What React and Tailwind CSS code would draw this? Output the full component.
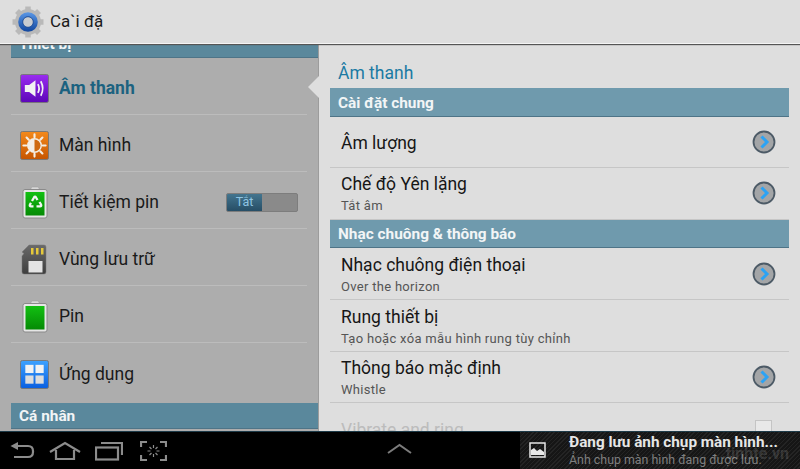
import React from "react";

function Tile({ from, to, children }) {
  return (
    <svg width="29" height="29" viewBox="0 0 30 30">
      <defs>
        <linearGradient id={"g" + from.slice(1)} x1="0" y1="0" x2="0" y2="1">
          <stop offset="0" stopColor={from} />
          <stop offset="1" stopColor={to} />
        </linearGradient>
      </defs>
      <rect x="0.5" y="0.5" width="29" height="29" rx="2" fill={"url(#g" + from.slice(1) + ")"} stroke="#777" />
      {children}
    </svg>
  );
}

const SoundIcon = () => (
  <Tile from="#9a2cf0" to="#5c06b8">
    <path d="M5 11.500h4.500L16 6.500v17l-6.500-5H5z" fill="#f2f2f2" />
    <path d="M18.500 10.500q2.500 4.500 0 9" fill="none" stroke="#f2f2f2" strokeWidth="1.800" />
    <path d="M21.500 7.500q4 7.500 0 15" fill="none" stroke="#f2f2f2" strokeWidth="1.800" />
  </Tile>
);

const SunIcon = () => (
  <Tile from="#f48a1c" to="#c65500">
    <g stroke="#f4efe6" strokeWidth="2.200" strokeLinecap="round">
      <path d="M15 3.500v3M15 23.500v3M3.500 15h3M23.500 15h3M6.800 6.800l2.200 2.200M21 21l2.200 2.200M6.800 23.200L9 21M21 9l2.200-2.200" />
    </g>
    <circle cx="15" cy="15" r="7" fill="#cf6a10" stroke="#f4efe6" strokeWidth="1.500" />
    <path d="M15 8a7 7 0 0 0 0 14z" fill="#f4efe6" />
  </Tile>
);

const BatteryShell = ({ children }) => (
  <svg width="26" height="33" viewBox="0 0 26 33">
    <path d="M9 2.500q0-1.500 1.500-1.500h5q1.500 0 1.500 1.500V4H9z" fill="#d8d8d8" stroke="#999" strokeWidth="0.500" />
    <rect x="1" y="3.500" width="24" height="28.500" rx="2" fill="#e6e6e6" stroke="#8a8a8a" />
    <defs>
      <linearGradient id="bat" x1="0" y1="0" x2="0" y2="1">
        <stop offset="0" stopColor="#12c012" />
        <stop offset="1" stopColor="#058a05" />
      </linearGradient>
    </defs>
    <rect x="3.500" y="6" width="19" height="23.500" fill="url(#bat)" />
    {children}
  </svg>
);

const SaverIcon = () => (
  <BatteryShell>
    <g fill="none" stroke="#f4f4f4" strokeWidth="2.300">
      <path d="M10 15l2-3.500q1-1.500 2 0l1.500 2.500" />
      <path d="M17.500 16l1.500 2.500q.8 1.800-1 1.800h-3.500" />
      <path d="M11.500 20.300H9q-1.800 0-1-1.800l1-1.700" />
    </g>
  </BatteryShell>
);

const StorageIcon = () => (
  <svg width="26" height="31" viewBox="0 0 26 31">
    <defs>
      <linearGradient id="sd" x1="0" y1="0" x2="0" y2="1">
        <stop offset="0" stopColor="#6a6a6a" />
        <stop offset="1" stopColor="#3e3e3e" />
      </linearGradient>
    </defs>
    <path d="M8 1h15q2 0 2 2v25q0 2-2 2H3q-2 0-2-2V12l2-2.500L1 8z" fill="url(#sd)" stroke="#777" strokeWidth="0.500" />
    <rect x="10" y="4" width="2.500" height="6.500" fill="#e6c93a" />
    <rect x="15" y="4" width="2.500" height="6.500" fill="#e6c93a" />
    <rect x="20" y="4" width="2.500" height="6.500" fill="#e6c93a" />
    <rect x="7.500" y="17" width="14" height="11.500" fill="#e4e4e4" />
  </svg>
);

const AppsIcon = () => (
  <Tile from="#3da2ff" to="#0a5fe0">
    <rect x="5.500" y="5" width="8.500" height="8.500" fill="#f2f2f2" />
    <rect x="16" y="5" width="8.500" height="8.500" fill="#f2f2f2" />
    <rect x="5.500" y="16" width="8.500" height="8.500" fill="#dcdcdc" />
    <rect x="16" y="16" width="8.500" height="8.500" fill="#dcdcdc" />
  </Tile>
);

const GearIcon = () => (
  <svg width="32" height="32" viewBox="0 0 32 32">
    <defs>
      <linearGradient id="ring" x1="0" y1="0" x2="0" y2="1">
        <stop offset="0" stopColor="#5a97e6" />
        <stop offset="1" stopColor="#12479e" />
      </linearGradient>
    </defs>
    <circle cx="16" cy="16" r="13" fill="#b9b9b9" />
    <g stroke="#b9b9b9" strokeWidth="5.500">
      <path d="M16 0.500v31M0.500 16h31M5 5l22 22M5 27L27 5" />
    </g>
    <circle cx="16" cy="16" r="9.800" fill="url(#ring)" />
    <circle cx="16" cy="16" r="5.300" fill="#c9ccd0" stroke="#0f3f8c" strokeWidth="0.800" />
  </svg>
);

const Chevron = () => (
  <svg width="24" height="24" viewBox="0 0 24 24">
    <circle cx="12" cy="12" r="10.500" fill="#a3a5a7" stroke="#4c5a66" strokeWidth="1.800" />
    <path d="M9.500 6.500L15 12l-5.500 5.500" fill="none" stroke="#2ba3f5" strokeWidth="3" />
  </svg>
);

function NavRow({ icon, label, active, last, right }) {
  return (
    <div className={"mx-[11px] h-[57px] pt-[5px] flex items-center shrink-0 " + (last ? "" : "border-b border-[#bcbcbc]")}>
      <div className="w-[48px] pl-[9px] flex items-center">{icon}</div>
      <span className={"text-[17.5px] " + (active ? "font-bold text-[#1c6280]" : "text-[#1a1a1a]")}>{label}</span>
      {right}
    </div>
  );
}

function SectionBar({ children, tone, className }) {
  return (
    <div className={"flex items-center px-[8px] pt-[3px] text-[15.4px] font-bold text-[#f2f5f6] border-b border-[#4e7487] shrink-0 " + tone + " " + className}>
      {children}
    </div>
  );
}

function SetRow({ title, sub, chevron, h }) {
  return (
    <div className={"flex items-center border-b border-[#c6c6c6] shrink-0 " + h}>
      <div className="flex-1 pl-[11px] flex flex-col">
        <span className="text-[17.5px] leading-[22px] text-[#161616]">{title}</span>
        {sub && <span className="mt-[2px] text-[13px] leading-[18px] tracking-[0.3px] text-[#555]">{sub}</span>}
      </div>
      {chevron && <div className="mr-[13px] mb-[2px] flex"><Chevron /></div>}
    </div>
  );
}

export default function App() {
  return (
    <div className="w-[800px] h-[469px] flex flex-col overflow-hidden bg-black font-['Roboto',sans-serif]">
      <header className="h-[44px] shrink-0 bg-[#dedede] border-b border-[#f4f4f4] shadow-[0_1px_1px_#555] relative z-10 flex items-center pl-[12px] gap-[6px]">
        <GearIcon />
        <span className="pt-[1px] text-[17px] text-[#1a1a1a]">Ca`i đặ</span>
      </header>

      <main className="flex-1 min-h-0 flex overflow-hidden relative">
        <aside className="w-[319px] shrink-0 bg-[#adadad] border-r border-[#9c9c9c] flex flex-col overflow-hidden">
          <SectionBar tone="bg-[#5a889c]" className="ml-[11px] h-[28px] mt-[-14px]">Thiết bị</SectionBar>
          <NavRow icon={<SoundIcon />} label="Âm thanh" active />
          <NavRow icon={<SunIcon />} label="Màn hình" />
          <NavRow
            icon={<div className="ml-[2px] flex"><SaverIcon /></div>}
            label="Tiết kiệm pin"
            right={
              <div className="ml-auto mr-[9px] w-[72px] h-[19px] flex rounded-[2px] bg-[#8a8a8a] border border-[#7d7d7d] overflow-hidden">
                <div className="w-[35px] bg-gradient-to-b from-[#43758f] to-[#274e66] text-[12.5px] text-[#8fc4e2] flex items-center justify-center">Tắt</div>
              </div>
            }
          />
          <NavRow icon={<div className="ml-[1px] flex"><StorageIcon /></div>} label="Vùng lưu trữ" />
          <NavRow icon={<div className="ml-[2px] flex"><BatteryShell /></div>} label="Pin" />
          <NavRow icon={<AppsIcon />} label="Ứng dụng" last />
          <SectionBar tone="bg-[#5a889c]" className="ml-[11px] h-[26px] mt-[3px]">Cá nhân</SectionBar>
        </aside>

        <section className="flex-1 min-w-0 bg-[#dedede] pl-[11px] pr-[11px] flex flex-col overflow-hidden">
          <div className="h-[44px] pt-[14px] shrink-0 flex items-center pl-[8px] text-[17.5px] text-[#1b7aa3]">Âm thanh</div>
          <SectionBar tone="bg-[#6f9aad]" className="h-[29px]">Cài đặt chung</SectionBar>
          <SetRow title="Âm lượng" chevron h="h-[51px] pt-[2px]" />
          <SetRow title="Chế độ Yên lặng" sub="Tắt âm" chevron h="h-[52px]" />
          <SectionBar tone="bg-[#6f9aad]" className="h-[28px]">Nhạc chuông &amp; thông báo</SectionBar>
          <SetRow title="Nhạc chuông điện thoại" sub="Over the horizon" chevron h="h-[52px] pt-[2px]" />
          <SetRow title="Rung thiết bị" sub="Tạo hoặc xóa mẫu hình rung tùy chỉnh" h="h-[52px] pt-[2px]" />
          <SetRow title="Thông báo mặc định" sub="Whistle" chevron h="h-[51px] pt-[2px]" />
          <div className="flex items-start shrink-0 h-[40px] pl-[11px] pt-[16px] justify-between">
            <span className="text-[17.5px] leading-[22px] text-[#bcbcbc]">Vibrate and ring</span>
            <div className="w-[17px] h-[17px] mt-[1px] mr-[17px] border border-[#c4c4c4] bg-[#e8e8e8]"></div>
          </div>
        </section>

        <svg className="absolute left-[308px] top-[31px]" width="12" height="24" viewBox="0 0 12 24">
          <path d="M12 0v24L0 12z" fill="#dedede" />
        </svg>
      </main>

      <footer className="h-[38px] shrink-0 bg-black border-t border-[#1d3a48] flex items-center relative z-10">
        <div className="flex items-center w-[520px] relative h-full">
          <div className="flex items-center pl-[9px] gap-[14px]">
            <svg width="26" height="20" viewBox="0 0 26 20" fill="none" stroke="#8c8c8c" strokeWidth="2.200">
              <path d="M4 5h15q5 0 5 5v1q0 5-5 5H5" />
              <path d="M9 1L1.500 5 9 9z" fill="#8c8c8c" stroke="none" />
            </svg>
            <svg width="32" height="20" viewBox="0 0 32 20" fill="none" stroke="#8c8c8c" strokeWidth="2.200">
              <path d="M1 11L16 2l15 9" />
              <path d="M7 9v9h18V9" />
            </svg>
            <svg width="28" height="20" viewBox="0 0 28 20" fill="none" stroke="#8c8c8c" strokeWidth="2.200">
              <rect x="1" y="6.500" width="22" height="12" />
              <path d="M6 2h21v12" />
            </svg>
            <svg width="27" height="20" viewBox="0 0 27 20" fill="none" stroke="#8c8c8c" strokeWidth="2.200" className="ml-[3px]">
              <path d="M1 6V1h6M20 1h6v5M26 14v5h-6M7 19H1v-5" />
              <path d="M13.500 4v3M13.500 13v3M7.500 10h3M16.500 10h3M9.500 6l2 2M15.500 12l2 2M9.500 14l2-2M15.500 8l2-2" strokeWidth="1.200" />
            </svg>
          </div>
          <svg className="absolute left-[387px] top-[11px]" width="25" height="12" viewBox="0 0 25 12" fill="none" stroke="#7c7c7c" strokeWidth="2">
            <path d="M1 10L12.500 2 24 10" />
          </svg>
        </div>
        <div className="flex-1 h-full flex items-center pb-[1px] bg-[repeating-linear-gradient(135deg,#242424_0,#242424_1px,#161616_1px,#161616_3px)] relative">
          <div className="w-[49px] pl-[9px] flex">
            <svg width="17" height="16" viewBox="0 0 17 16">
              <rect x="1" y="1" width="15" height="14" fill="none" stroke="#e8e8e8" strokeWidth="1.500" />
              <path d="M2 13V8l3-2 3 3 3-2 4 3v3z" fill="#e8e8e8" />
            </svg>
          </div>
          <div className="flex flex-col">
            <span className="text-[15.3px] leading-[19px] font-bold text-[#e6e6e6] whitespace-nowrap">Đang lưu ảnh chụp màn hình...</span>
            <span className="text-[12.4px] leading-[15px] text-[#7f7f7f] whitespace-nowrap">Ảnh chụp màn hình đang được lưu.</span>
          </div>
          <span className="absolute right-[11px] bottom-[6px] text-[16px] leading-[18px] font-bold text-white/15">tinhte.vn</span>
        </div>
      </footer>
    </div>
  );
}
